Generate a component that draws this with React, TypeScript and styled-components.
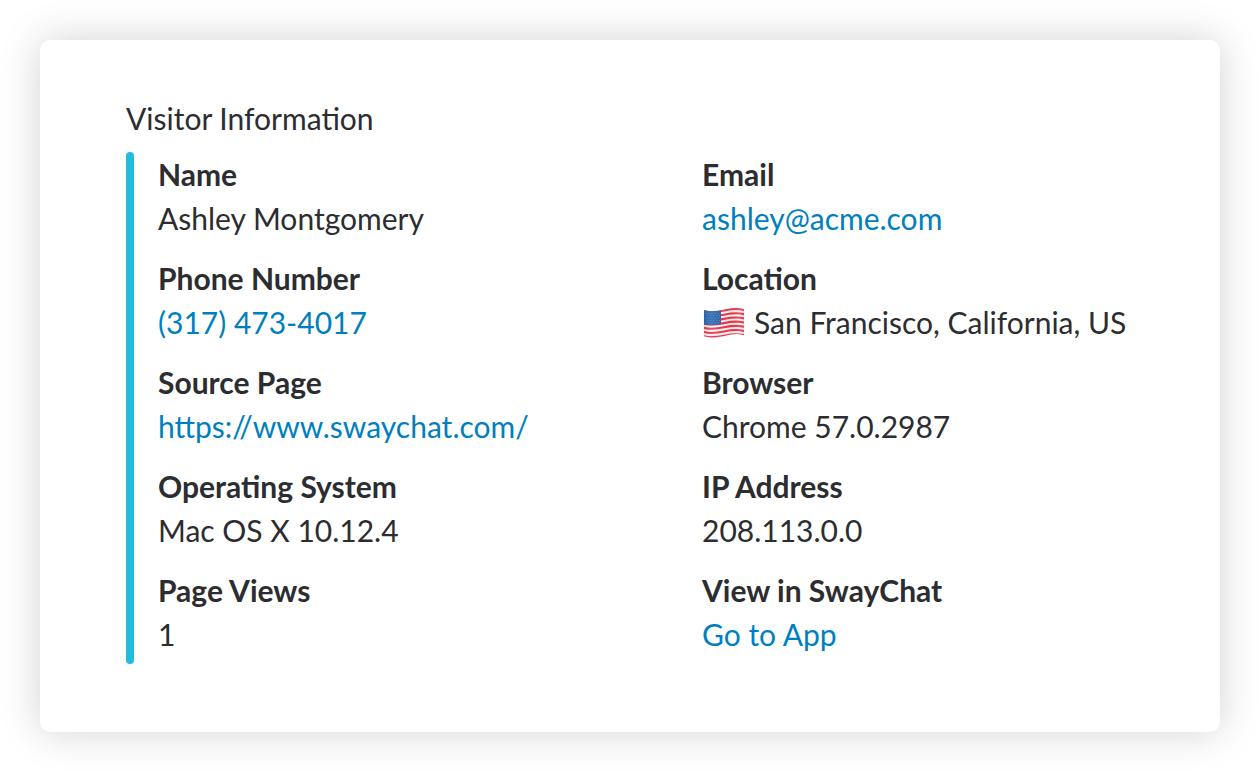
import React from "react";
import styled, { createGlobalStyle } from "styled-components";

const GlobalStyle = createGlobalStyle`
  * { box-sizing: border-box; }
  body {
    margin: 0;
    background: #fff;
    color: #2c2d30;
    font-family: Lato, "Open Sans", sans-serif;
    font-size: 30px;
    line-height: 44px;
    -webkit-font-smoothing: antialiased;
  }
`;

const Page = styled.main`
  padding: 40px;
`;

const Card = styled.section`
  padding: 56px 86px 68px;
  border-radius: 10px;
  background: #fff;
  box-shadow: 0 0 40px rgba(0, 0, 0, 0.18);
`;

const Title = styled.h1`
  margin: 0 0 12px;
  font-size: 30px;
  font-weight: 400;
`;

const Attachment = styled.div`
  display: flex;
  gap: 24px;
`;

const Bar = styled.div`
  flex: none;
  width: 8px;
  border-radius: 4px;
  background: #24badb;
`;

const Fields = styled.dl`
  flex: 1;
  display: grid;
  grid-template-columns: repeat(2, 1fr);
  column-gap: 112px;
  row-gap: 16px;
  margin: 0;
  padding: 0 0 8px;
  white-space: nowrap;
`;

const Field = styled.div`
  min-width: 0;
`;

const Label = styled.dt`
  font-weight: 700;
`;

const Value = styled.dd`
  display: flex;
  align-items: center;
  gap: 8px;
  margin: 0;
`;

const Link = styled.a`
  color: #007fc0;
  text-decoration: none;
`;

const FlagIcon = styled.svg`
  flex: none;
  width: 44px;
  height: 44px;
`;

/* Points along the waving edge, from the hoist (x = 2) to the fly (x = 42). */
const wave = (y: number) => `M2 ${y} C9 ${y + 2} 15 ${y + 1} 22 ${y - 0.5} S35 ${y - 3} 42 ${y - 1}`;
const stripeHeight = 2.1;
const outline = "M2 9.5 Q2 9 3 9.2 C9 11 15 10 22 8.5 S35 6 41 7.7 Q42 8 42 8.6 V33.5 Q42 34.5 41 34 C35 32 29 33.5 22 35 S9 37 3 35.5 Q2 35.3 2 34.5 Z";
const stars = [0, 1, 2, 3, 4].flatMap((row) =>
  [0, 1, 2, 3, 4].map((col) => ({ x: 4 + col * 3 + (row % 2) * 1.5, y: 12.2 + row * 2.4 })),
);

const Flag = () => (
  <FlagIcon viewBox="0 -1 44 44" role="img" aria-label="United States">
    <defs>
      <clipPath id="flag-shape">
        <path d={outline} />
      </clipPath>
      <linearGradient id="flag-folds" x1="0" x2="1" y1="0" y2="0">
        <stop offset="0" stopColor="#000" stopOpacity="0.12" />
        <stop offset="0.2" stopColor="#fff" stopOpacity="0.1" />
        <stop offset="0.5" stopColor="#fff" stopOpacity="0" />
        <stop offset="0.65" stopColor="#000" stopOpacity="0.04" />
        <stop offset="0.85" stopColor="#fff" stopOpacity="0.1" />
        <stop offset="1" stopColor="#000" stopOpacity="0.1" />
      </linearGradient>
    </defs>
    <g clipPath="url(#flag-shape)">
      <rect width="44" height="44" fill="#f8f0f0" />
      {[0, 1, 2, 3, 4, 5, 6].map((i) => (
        <path
          key={i}
          d={wave(10 + i * stripeHeight * 2)}
          fill="none"
          stroke="#e8374d"
          strokeWidth={stripeHeight}
        />
      ))}
      <path d="M2 8 C9 11 14 10 19 9 V23 C14 24 9 25 2 23.5 Z" fill="#2864ac" />
      {stars.map((s) => (
        <circle key={`${s.x}-${s.y}`} cx={s.x} cy={s.y} r="0.45" fill="#9dbbdf" />
      ))}
      <rect width="44" height="44" fill="url(#flag-folds)" />
    </g>
    <path d={outline} fill="none" stroke="#777" strokeOpacity="0.25" strokeWidth="0.4" />
  </FlagIcon>
);

type Item = { label: string; value: string; href?: string; flag?: boolean };

const items: Item[] = [
  { label: "Name", value: "Ashley Montgomery" },
  { label: "Email", value: "ashley@acme.com", href: "mailto:ashley@acme.com" },
  { label: "Phone Number", value: "(317) 473-4017", href: "tel:3174734017" },
  { label: "Location", value: "San Francisco, California, US", flag: true },
  { label: "Source Page", value: "https://www.swaychat.com/", href: "https://www.swaychat.com/" },
  { label: "Browser", value: "Chrome 57.0.2987" },
  { label: "Operating System", value: "Mac OS X 10.12.4" },
  { label: "IP Address", value: "208.113.0.0" },
  { label: "Page Views", value: "1" },
  { label: "View in SwayChat", value: "Go to App", href: "#app" },
];

export default function App() {
  return (
    <Page>
      <GlobalStyle />
      <Card>
        <Title>Visitor Information</Title>
        <Attachment>
          <Bar />
          <Fields>
            {items.map((item) => (
              <Field key={item.label}>
                <Label>{item.label}</Label>
                <Value>
                  {item.flag && <Flag />}
                  {item.href ? <Link href={item.href}>{item.value}</Link> : item.value}
                </Value>
              </Field>
            ))}
          </Fields>
        </Attachment>
      </Card>
    </Page>
  );
}
